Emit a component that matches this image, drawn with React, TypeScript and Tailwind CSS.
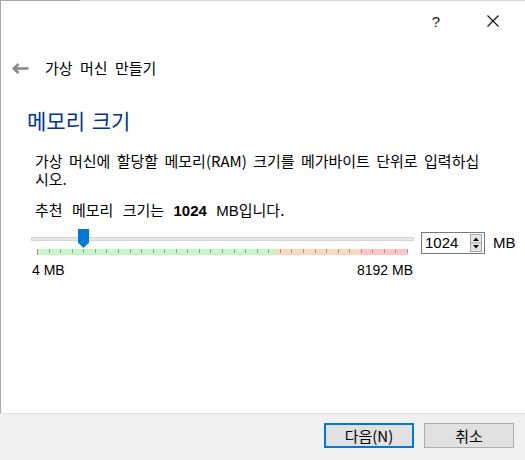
import React from 'react'

const KO = "font-['Noto_Sans_CJK_KR',sans-serif]"
const LAT = "font-['Liberation_Sans','Noto_Sans_CJK_KR',sans-serif]"

const TICKS = Array.from({ length: 33 }, (_, i) => i)

function BackArrow() {
  return (
    <svg width="17" height="11" viewBox="0 0 17 11" fill="none">
      <path d="M2 5.5H16.5" stroke="#8a8a8a" strokeWidth="2.6" />
      <path d="M6.5 1L1.8 5.5L6.5 10" stroke="#8a8a8a" strokeWidth="2.6" />
    </svg>
  )
}

function CloseGlyph() {
  return (
    <svg width="12" height="12" viewBox="0 0 12 12" fill="none">
      <path d="M0.5 0.5L11.5 11.5M11.5 0.5L0.5 11.5" stroke="#111" strokeWidth="1.1" />
    </svg>
  )
}

function Spinner() {
  return (
    <svg width="12" height="18" viewBox="0 0 12 18">
      <rect x="0.5" y="0.5" width="11" height="17" fill="#e6e6e6" stroke="#a8a8a8" />
      <line x1="1" y1="9" x2="11" y2="9" stroke="#a8a8a8" />
      <path d="M3 7L6 3.5L9 7Z" fill="#111" />
      <path d="M3 11L6 14.5L9 11Z" fill="#111" />
    </svg>
  )
}

export default function App() {
  return (
    <div className={`w-[525px] h-[460px] flex flex-col bg-white overflow-hidden text-black ${KO}`}>
      {/* top edge of the window */}
      <div className="h-px flex shrink-0">
        <div className="w-[80px] bg-[#a8a8a8]" />
        <div className="flex-1 bg-[#d4d4d4]" />
      </div>

      <div className="flex-1 flex flex-col border-l border-[#a8a8a8]">
        {/* Title bar */}
        <div className="h-[40px] flex justify-end items-center pr-[9px] shrink-0">
          <div className={`w-[46px] flex justify-center text-[15px] leading-none text-[#222] ${LAT}`}>?</div>
          <div className="w-[46px] ml-[11px] flex justify-center">
            <CloseGlyph />
          </div>
        </div>

        {/* Back + wizard title */}
        <div className="h-[54px] flex items-center pl-[11px] shrink-0">
          <BackArrow />
          <span className="ml-[16px] text-[15px] leading-[18px] [word-spacing:4px]">가상 머신 만들기</span>
        </div>

        {/* Page heading */}
        <div className="h-[50px] flex items-center pl-[26px] shrink-0">
          <h1 className="text-[21px] leading-[24px] text-[#003399] [word-spacing:2px]">메모리 크기</h1>
        </div>

        <div className="pl-[34px] text-[15px] leading-[18px]">
          <p className="mt-[7px] whitespace-nowrap [word-spacing:3px]">
            가상 머신에 할당할 메모리(RAM) 크기를 메가바이트 단위로 입력하십
            <br />
            시오.
          </p>
          <p className="mt-[13px] whitespace-nowrap [word-spacing:6px]">
            추천 메모리 크기는 <b className={`font-bold ${LAT}`}>1024</b> <span className={LAT}>MB</span>입니다.
          </p>
        </div>

        {/* Slider + spin box */}
        <div className="mt-[9px] pl-[30px] flex items-start">
          <div className="w-[383px] relative">
            <div className="mt-[8px] h-[4px] border border-[#d6d6d6] bg-[#e7e7e7]" />
            <div className="mt-[8px] mx-[6px] h-[6px] flex relative">
              <div className="w-[238px] bg-[#c6f7c6]" />
              <div className="w-[85px] bg-[#ffd8c4]" />
              <div className="w-[48px] bg-[#ffc6c6]" />
              <div className="absolute inset-0 flex justify-between">
                {TICKS.map(i => (
                  <div key={i} className={`w-px bg-[#9c9c9c] ${i === 0 ? 'h-[6px]' : 'h-[4px]'}`} />
                ))}
              </div>
            </div>
            <div className={`mt-[7px] flex justify-between px-px text-[14px] leading-[16px] ${LAT}`}>
              <span>4 MB</span>
              <span>8192 MB</span>
            </div>
            <svg className="absolute left-[47px] top-0" width="11" height="19" viewBox="0 0 11 19">
              <path d="M0 0H11V13.5L5.5 19L0 13.5Z" fill="#0078d7" />
            </svg>
          </div>

          <div className="ml-[7px] mt-[3px] w-[64px] h-[22px] border border-[#7a7a7a] flex items-center">
            <span className={`pl-[3px] text-[15px] leading-[16px] ${LAT}`}>1024</span>
            <div className="ml-auto mr-[2px] flex">
              <Spinner />
            </div>
          </div>
          <span className={`ml-[8px] mt-[6px] text-[15px] leading-[16px] ${LAT}`}>MB</span>
        </div>
      </div>

      {/* Footer */}
      <div className="h-[47px] shrink-0 border-t border-[#dfdfdf] bg-[#f0f0f0] flex justify-end items-start pt-[9px] pr-[11px] gap-[10px]">
        <button className="w-[90px] h-[25px] border-2 border-[#0078d7] bg-[#e1e1e1] text-[15px] leading-none flex items-center justify-center">
          다음(N)
        </button>
        <button className="w-[90px] h-[25px] border border-[#adadad] bg-[#e1e1e1] text-[15px] leading-none flex items-center justify-center">
          취소
        </button>
      </div>
    </div>
  )
}
